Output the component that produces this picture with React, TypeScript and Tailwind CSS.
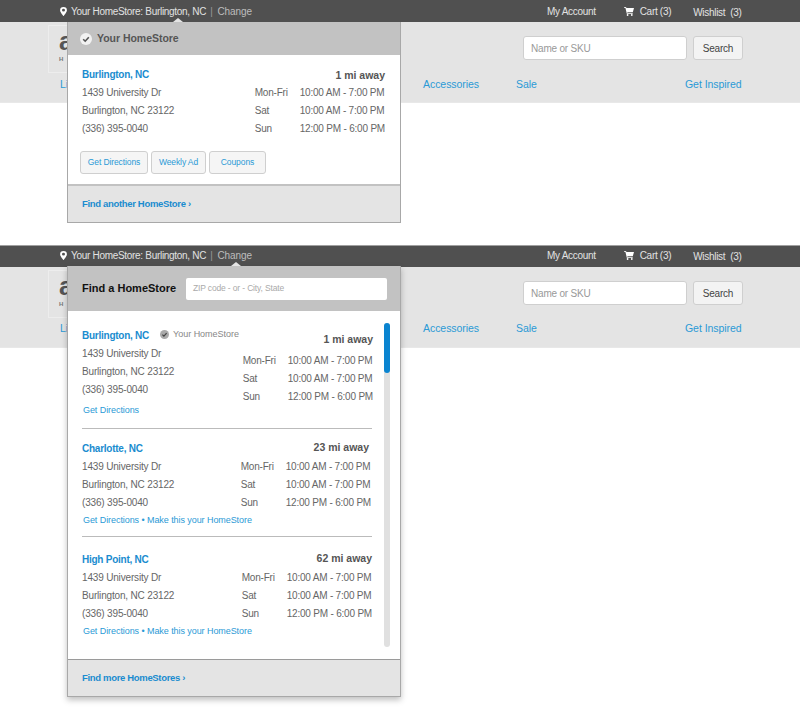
import React from "react";

const Pin = () => (
  <svg width="7" height="9" viewBox="0 0 8 11" preserveAspectRatio="none" className="shrink-0">
    <path fillRule="evenodd" fill="#fff" d="M4 0a3.9 3.9 0 0 0-3.9 3.9C.1 6.6 4 11 4 11s3.9-4.4 3.9-7.1A3.9 3.9 0 0 0 4 0zm0 2.2a1.7 1.7 0 1 1 0 3.4 1.7 1.7 0 0 1 0-3.4z" />
  </svg>
);

const CartIcon = () => (
  <svg width="10" height="9" viewBox="0 0 10 9">
    <path fill="#fff" d="M0 0h2l.4 1H10L8.8 5.2H3.3l.2.8h5.2v.8H2.8L1.4.8H0z" />
    <circle cx="3.6" cy="8" r=".9" fill="#fff" />
    <circle cx="7.8" cy="8" r=".9" fill="#fff" />
  </svg>
);

const Check = ({ size, bg, fg }: { size: number; bg: string; fg: string }) => (
  <svg width={size} height={size} viewBox="0 0 12 12" className="shrink-0">
    <circle cx="6" cy="6" r="6" fill={bg} />
    <path d="M3.2 6.2l2 2 3.6-4" fill="none" stroke={fg} strokeWidth="1.6" />
  </svg>
);

function PageHead({ second }: { second: boolean }) {
  return (
    <>
      <div className={`h-[22px] bg-[#505050] flex items-center text-[10px] tracking-[-0.3px] text-[#e2e2e2] ${second ? "pb-[2px] border-t border-[#a0a0a0]" : ""}`}>
        <div className="ml-[60px] flex items-center w-[487px]">
          <Pin />
          <span className="ml-[4px]">Your HomeStore: Burlington, NC</span>
          <span className="ml-[4px] text-[#999]">|</span>
          <span className="ml-[5px] text-[#bdbdbd] tracking-[-0.1px]">Change</span>
        </div>
        <span>My Account</span>
        <span className="ml-[28px] flex items-center gap-[6px]">
          <CartIcon />
          <span>Cart (3)</span>
        </span>
        <span className="ml-[22px] mt-[2px]">Wishlist&nbsp; (3)</span>
      </div>
      <div className="h-[81px] bg-[#e4e4e4] flex flex-col border-b border-[#e8e8e8]">
        <div className="flex items-start h-[50px]">
          <div className="ml-[48px] mt-[3px] w-[40px] h-[48px] border border-[#ededed] pl-[10px] shrink-0">
            <div className="text-[26px] leading-[30px] font-bold text-[#555]">a</div>
            <div className="text-[6px] leading-[6px] font-bold text-[#777]">H</div>
          </div>
          <div className="ml-[435px] mt-[14px] w-[164px] h-[24px] bg-white border border-[#cfcfcf] rounded-[3px] pl-[7px] flex items-center text-[10px] tracking-[-0.2px] text-[#999]">
            Name or SKU
          </div>
          <div className="ml-[6px] mt-[14px] w-[50px] h-[24px] bg-[#f3f3f3] border border-[#cfcfcf] rounded-[3px] flex items-center justify-center text-[10px] tracking-[-0.2px] text-[#444]">
            Search
          </div>
        </div>
        <div className={`flex text-[10.5px] tracking-[-0.05px] text-[#2a9ad6] leading-[16px] ${second ? "mt-[3px]" : "mt-[4px]"}`}>
          <span className="ml-[60px] w-[363px]">Li</span>
          <span className="w-[93px]">Accessories</span>
          <span className="w-[169px]">Sale</span>
          <span>Get Inspired</span>
        </div>
      </div>
    </>
  );
}

const Hours = ({ gap }: { gap: string }) => (
  <div className="flex flex-col text-[10px] tracking-[-0.2px] leading-[18px] text-[#666]">
    {[
      ["Mon-Fri", "10:00 AM - 7:00 PM"],
      ["Sat", "10:00 AM - 7:00 PM"],
      ["Sun", "12:00 PM - 6:00 PM"],
    ].map(([d, h]) => (
      <div key={d} className="flex">
        <span className={gap}>{d}</span>
        <span>{h}</span>
      </div>
    ))}
  </div>
);

const Address = () => (
  <div className="text-[10px] tracking-[-0.17px] leading-[18px] text-[#666]">
    <div>1439 University Dr</div>
    <div>Burlington, NC 23122</div>
    <div>(336) 395-0040</div>
  </div>
);

const Arrow = ({ left }: { left: string }) => (
  <div className={`absolute -top-[4px] ${left} w-0 h-0 border-x-[5px] border-x-transparent border-b-[4px] border-b-[#e4e4e4]`} />
);

function CurrentPanel() {
  return (
    <div className="absolute left-[67px] top-[22px] w-[334px] border-x border-b border-[#a8a8a8] bg-white">
      <Arrow left="left-[105px]" />
      <div className="h-[33px] bg-[#c2c2c2] flex items-center pl-[12px] gap-[5px]">
        <Check size={12} bg="#f2f2f2" fg="#555" />
        <span className="text-[10.5px] tracking-[-0.03px] font-bold text-[#555]">Your HomeStore</span>
      </div>
      <div className="h-[129px] pl-[14px] pr-[15px] pt-[11px]">
        <div className="flex justify-between items-center leading-[18px]">
          <span className="text-[10px] tracking-[-0.25px] font-bold text-[#1a8ccf]">Burlington, NC</span>
          <span className="text-[10.5px] font-bold text-[#555]">1 mi away</span>
        </div>
        <div className="flex justify-between">
          <Address />
          <Hours gap="w-[45px]" />
        </div>
        <div className="flex gap-[3px] mt-[13px] -ml-[2px] text-[8.5px] tracking-[-0.1px] text-[#2a9ad6]">
          <div className="w-[68px] h-[23px] border border-[#cfcfcf] rounded-[3px] bg-[#f5f5f5] flex items-center justify-center">Get Directions</div>
          <div className="w-[55px] h-[23px] border border-[#cfcfcf] rounded-[3px] bg-[#f5f5f5] flex items-center justify-center">Weekly Ad</div>
          <div className="w-[57px] h-[23px] border border-[#cfcfcf] rounded-[3px] bg-[#f5f5f5] flex items-center justify-center">Coupons</div>
        </div>
      </div>
      <div className="h-[38px] bg-[#e4e4e4] border-t-2 border-[#c2c2c2] flex items-center pl-[14px] text-[9.5px] tracking-[-0.33px] font-bold text-[#1a8ccf]">
        Find another HomeStore ›
      </div>
    </div>
  );
}

function StoreCard({
  name,
  away,
  awayPr,
  hoursMr,
  links,
}: {
  name: string;
  away: string;
  awayPr: string;
  hoursMr: string;
  links: string;
}) {
  return (
    <div className="w-[290px]">
      <div className="flex justify-between items-center h-[18px] pb-[2px]">
        <span className="text-[10px] tracking-[-0.25px] font-bold text-[#1a8ccf]">{name}</span>
        <span className={`text-[10.5px] font-bold text-[#555] ${awayPr}`}>{away}</span>
      </div>
      <div className="flex justify-between">
        <Address />
        <div className={hoursMr}>
          <Hours gap="w-[45px]" />
        </div>
      </div>
      <div className="mt-[1px] ml-[1px] h-[16px] flex items-center text-[9px] tracking-[-0.07px] text-[#2a9ad6]">{links}</div>
    </div>
  );
}

function FinderPanel() {
  return (
    <div className="absolute left-[67px] top-[21px] w-[334px] border-x border-b border-[#a8a8a8] bg-white shadow-[0_3px_6px_rgba(0,0,0,0.25)]">
      <Arrow left="left-[163px]" />
      <div className="h-[45px] bg-[#c2c2c2] flex items-center pl-[14px]">
        <span className="text-[11px] font-bold text-[#111] w-[104px]">Find a HomeStore</span>
        <div className="w-[201px] h-[22px] bg-white rounded-[2px] flex items-center pl-[7px] text-[8.5px] tracking-[-0.15px] text-[#aaa]">
          ZIP code - or - City, State
        </div>
      </div>
      <div className="h-[348px] flex pl-[14px] pt-[16px]">
        <div className="flex flex-col w-[302px]">
          <div className="w-[290px] relative">
            <div className="flex items-center h-[18px] pb-[2px]">
              <span className="text-[10px] tracking-[-0.25px] font-bold text-[#1a8ccf]">Burlington, NC</span>
              <span className="ml-[11px] -mt-[1px] flex items-center gap-[4px] text-[9px] tracking-[-0.02px] text-[#888]">
                <Check size={9} bg="#aaa" fg="#444" />
                Your HomeStore
              </span>
            </div>
            <div className="flex justify-between">
              <Address />
              <div className="mt-[7px] -mb-[7px] -mr-[1px]">
                <Hours gap="w-[45px]" />
              </div>
            </div>
            <div className="mt-[4px] ml-[1px] h-[16px] flex items-center text-[9px] tracking-[-0.07px] text-[#2a9ad6]">Get Directions</div>
            <span className="absolute right-[-1px] top-[5px] text-[10.5px] font-bold text-[#555]">1 mi away</span>
          </div>
          <div className="w-[290px] h-px bg-[#bbb] mt-[9px] mb-[11px]" />
          <StoreCard name="Charlotte, NC" away="23 mi away" awayPr="pr-[3px]" hoursMr="mr-[1px]" links="Get Directions • Make this your HomeStore" />
          <div className="w-[290px] h-px bg-[#bbb] mt-[7px] mb-[14px]" />
          <StoreCard name="High Point, NC" away="62 mi away" awayPr="" hoursMr="" links="Get Directions • Make this your HomeStore" />
        </div>
        <div className="w-[6px] h-[324px] -mt-[4px] bg-[#e0e0e0] rounded-full shrink-0">
          <div className="h-[50px] bg-[#0a84d0] rounded-full" />
        </div>
      </div>
      <div className="h-[37px] bg-[#e4e4e4] border-t border-[#9a9a9a] flex items-center pl-[14px] text-[9.5px] tracking-[-0.33px] font-bold text-[#1a8ccf]">
        Find more HomeStores ›
      </div>
    </div>
  );
}

export default function App() {
  return (
    <div className="w-[800px] h-[708px] bg-white overflow-hidden font-['Liberation_Sans',Arial,sans-serif]">
      <section className="relative h-[245px]">
        <PageHead second={false} />
        <CurrentPanel />
      </section>
      <section className="relative h-[463px]">
        <PageHead second={true} />
        <FinderPanel />
      </section>
    </div>
  );
}
